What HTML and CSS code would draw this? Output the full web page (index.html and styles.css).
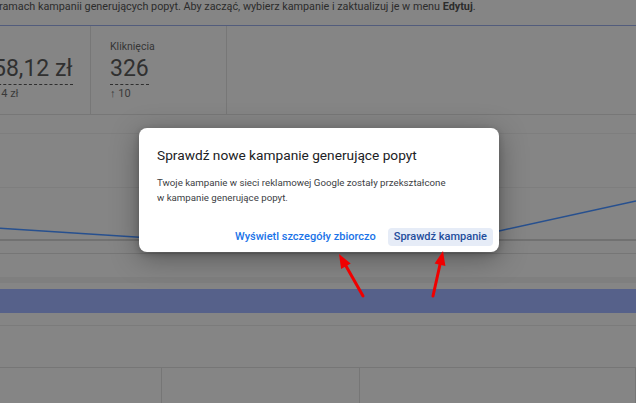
FILE: index.html
```html
<!DOCTYPE html>
<html lang="pl">
<head>
<meta charset="utf-8">
<link rel="stylesheet" href="styles.css">
</head>
<body>
<div class="page">
  <div class="notice">ramach kampanii generujących popyt. Aby zacząć, wybierz kampanie i zaktualizuj je w menu <b>Edytuj</b>.</div>
  <div class="metrics">
    <div class="card card-cost">
      <div class="label">Koszt</div>
      <div class="value">58,12 zł</div>
      <div class="delta">↑ 4 zł</div>
    </div>
    <div class="card card-clicks">
      <div class="label">Kliknięcia</div>
      <div class="value">326</div>
      <div class="delta">↑ 10</div>
    </div>
  </div>
  <svg class="chart" width="636" height="140" viewBox="0 115 636 140">
    <line x1="0" y1="133.5" x2="636" y2="133.5" class="grid"/>
    <line x1="0" y1="187.5" x2="636" y2="187.5" class="grid"/>
    <line x1="0" y1="240" x2="636" y2="240" class="axis"/>
    <line x1="0" y1="253.5" x2="636" y2="253.5" class="axis2"/>
    <polyline points="0,228.3 300,247.5 420,247 499,231 636,201" class="series"/>
  </svg>
  <div class="toolbar"></div>
  <div class="strip"></div>
  <div class="spacer"></div>
  <div class="selected"></div>
  <div class="gap"></div>
  <div class="empty"></div>
  <div class="table-head">
    <div class="col col-a"></div>
    <div class="col col-b"><span class="th">Rodzaj</span></div>
    <div class="col col-c"><span class="th">Stan</span></div>
  </div>
</div>

<div class="dialog">
  <h2 class="dialog-title">Sprawdź nowe kampanie generujące popyt</h2>
  <p class="dialog-body">Twoje kampanie w sieci reklamowej Google zostały przekształcone<br>w kampanie generujące popyt.</p>
  <div class="dialog-actions">
    <span class="btn-link">Wyświetl szczegóły zbiorczo</span>
    <span class="btn-tonal">Sprawdź kampanie</span>
  </div>
</div>

<svg class="arrows" width="636" height="403" viewBox="0 0 636 403">
  <line x1="363" y1="296" x2="346" y2="266" class="arrow-line"/>
  <polygon points="339,254 350.7,263.5 341.1,268.9" class="arrow-head"/>
  <line x1="433" y1="296" x2="440" y2="264.5" class="arrow-line"/>
  <polygon points="443,251 445.4,265.9 434.6,263.5" class="arrow-head"/>
</svg>
</body>
</html>
```

FILE: styles.css
```css
html, body {
  margin: 0;
  padding: 0;
}
body {
  width: 636px;
  height: 403px;
  overflow: hidden;
  background: #858585;
  font-family: Roboto, "Liberation Sans", sans-serif;
  position: relative;
}
.page {
  width: 636px;
}
.notice {
  height: 25px;
  font-size: 10.8px;
  line-height: 14px;
  color: #2c2c2c;
  white-space: nowrap;
  margin-left: -1px;
}
.notice b {
  font-weight: 700;
}
.metrics {
  display: flex;
  height: 88px;
  border-top: 1px solid #525c7c;
  border-bottom: 1px solid #777777;
  margin-left: -28px;
}
.card {
  box-sizing: border-box;
  height: 88px;
  padding: 14px 0 0 19px;
  border-right: 1px solid #777777;
  color: #303030;
}
.card-cost {
  width: 119px;
  padding-left: 21px;
}
.card-clicks {
  width: 136px;
}
.label {
  font-size: 10.5px;
  line-height: 13px;
  color: #353535;
  height: 13px;
}
.card-cost .label {
  visibility: hidden;
}
.value {
  display: inline-block;
  margin-top: 3px;
  font-size: 23px;
  line-height: 26px;
  padding-bottom: 2px;
  border-bottom: 1px dashed #2f2f2f;
  white-space: nowrap;
}
.delta {
  margin-top: 2px;
  font-size: 11px;
  line-height: 13px;
  color: #3a3a3a;
}
.chart {
  display: block;
}
.grid {
  stroke: #7e7e7e;
  stroke-width: 1;
}
.axis {
  stroke: #717171;
  stroke-width: 2;
}
.axis2 {
  stroke: #767676;
  stroke-width: 1;
}
.series {
  fill: none;
  stroke: #27508f;
  stroke-width: 1.4;
}
.toolbar {
  height: 22px;
}
.strip {
  height: 6px;
  background: #7f7f7f;
}
.spacer {
  height: 6px;
}
.selected {
  height: 24px;
  background: #56618a;
}
.gap {
  height: 12px;
  border-bottom: 1px solid #7b7b7b;
}
.empty {
  height: 41px;
  border-bottom: 1px solid #767676;
}
.table-head {
  display: flex;
  height: 40px;
}
.col {
  box-sizing: border-box;
  height: 40px;
  border-right: 1px solid #767676;
}
.col-a {
  width: 162px;
}
.col-b {
  width: 198px;
  text-align: right;
  padding: 28px 47px 0 0;
}
.col-c {
  flex: 1;
  padding: 28px 0 0 8px;
}
.th {
  font-size: 10.5px;
  line-height: 13px;
  color: #3a3a3a;
}
.dialog {
  position: absolute;
  left: 139px;
  top: 128px;
  width: 360px;
  height: 124px;
  box-sizing: border-box;
  background: #ffffff;
  border-radius: 8px;
  box-shadow: 0 6px 28px rgba(0, 0, 0, 0.35), 0 2px 6px rgba(0, 0, 0, 0.2);
  padding: 17px 6px 6px 18px;
  display: flex;
  flex-direction: column;
}
.dialog-title {
  margin: 0;
  font-size: 13.7px;
  line-height: 20px;
  font-weight: 400;
  color: #202124;
}
.dialog-body {
  margin: 10px 0 0 0;
  font-size: 9.7px;
  line-height: 15px;
  color: #3c4043;
}
.dialog-actions {
  margin-top: auto;
  display: flex;
  justify-content: flex-end;
  align-items: center;
  gap: 12px;
}
.btn-link {
  font-size: 11px;
  font-weight: 500;
  color: #1a73e8;
  line-height: 18px;
}
.btn-tonal {
  font-size: 11px;
  font-weight: 500;
  color: #1f4d9c;
  background: #e6ecf7;
  border-radius: 4px;
  line-height: 18px;
  padding: 0 6px;
}
.arrows {
  position: absolute;
  left: 0;
  top: 0;
  pointer-events: none;
}
.arrow-line {
  stroke: #f00000;
  stroke-width: 3;
  stroke-linecap: round;
}
.arrow-head {
  fill: #f00000;
}
```
